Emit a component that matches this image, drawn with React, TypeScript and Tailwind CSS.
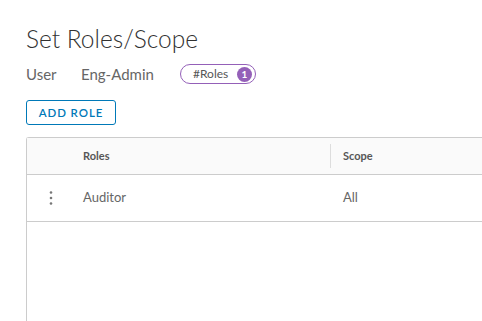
import React from 'react';

const rows = [{ role: 'Auditor', scope: 'All' }];

export default function App() {
  return (
    <div className="h-[321px] w-[482px] overflow-hidden bg-white pl-[26px] font-['Lato',sans-serif] text-[#565656]">
      <h1 className="pt-[25px] text-[24.5px] font-light leading-[28px] text-[#313131]">Set Roles/Scope</h1>
      <div className="mt-[11px] flex h-[20px] items-center text-[15px] leading-[20px] text-[#666]">
        <span className="w-[55px]">User</span>
        <span className="w-[99px]">Eng-Admin</span>
        <span className="flex h-[20px] w-[76px] items-center rounded-full border border-[#9460b8] pl-[12px] pr-[3px] text-[12px] text-[#565656]">
          #Roles
          <span className="ml-auto flex h-[15px] w-[15px] items-center justify-center rounded-full bg-[#9460b8] text-[10px] font-bold leading-none text-white">
            1
          </span>
        </span>
      </div>
      <button className="mt-[16px] flex h-[25px] w-[90px] items-center justify-center rounded-[3px] border border-[#0079b8] text-[11.5px] font-semibold tracking-[0.08em] text-[#0079b8]">
        ADD ROLE
      </button>
      <div className="mt-[12px] h-[200px] w-[470px] rounded-tl-[3px] border-l border-t border-[#ccc]">
        <div className="flex h-[37px] items-center border-b border-[#ccc] bg-[#fafafa] text-[11px] font-bold text-[#565656]">
          <div className="w-[45px]" />
          <div className="flex h-[24px] w-[259px] items-center border-r border-[#ddd] pl-[11px]">Roles</div>
          <div className="pl-[12px]">Scope</div>
        </div>
        {rows.map((r) => (
          <div key={r.role} className="flex h-[47px] items-center border-b border-[#ccc] text-[13px] text-[#666]">
            <div className="flex w-[45px] justify-center pl-[2px]">
              <svg width="4" height="16" viewBox="0 0 4 16" fill="#777">
                <circle cx="2" cy="2.5" r="1.3" />
                <circle cx="2" cy="8" r="1.3" />
                <circle cx="2" cy="13.5" r="1.3" />
              </svg>
            </div>
            <div className="w-[259px] pl-[11px]">{r.role}</div>
            <div className="pl-[12px]">{r.scope}</div>
          </div>
        ))}
      </div>
    </div>
  );
}
